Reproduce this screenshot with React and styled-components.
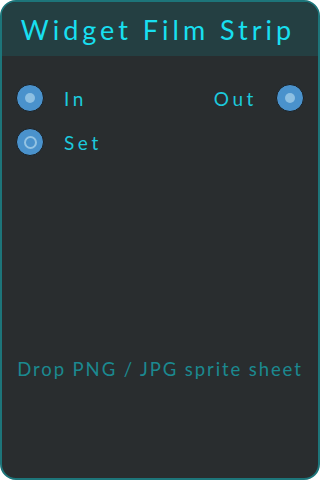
import React from "react"
import styled, { createGlobalStyle } from "styled-components"

const GlobalStyle = createGlobalStyle`
  html, body {
    margin: 0;
    padding: 0;
    background: #ffffff;
  }
  * {
    box-sizing: border-box;
  }
`

const Node = styled.div`
  width: 320px;
  height: 480px;
  display: flex;
  flex-direction: column;
  border: 2px solid #1d757a;
  border-radius: 16px;
  background: #292d2f;
  overflow: hidden;
  font-family: "Lato", "Open Sans", sans-serif;
`

const Header = styled.div`
  height: 54px;
  display: flex;
  align-items: center;
  justify-content: center;
  background: #243f42;
`

const Title = styled.div`
  color: #18dff0;
  font-size: 27px;
  letter-spacing: 4px;
  padding-right: 4px;
`

const Body = styled.div`
  flex: 1;
  display: flex;
  flex-direction: column;
  padding: 28px 14px 0;
`

const Row = styled.div`
  display: flex;
  align-items: center;
  justify-content: ${props => (props.spread ? "space-between" : "flex-start")};
  height: 28px;
  margin-bottom: 16px;
`

const Port = styled.div`
  display: flex;
  align-items: center;
  gap: ${props => (props.right ? "19px" : "20px")};
`

const Socket = styled.div`
  width: 28px;
  height: 28px;
  border-radius: 50%;
  background: #4a92cc;
  border: 1.5px solid #1a1e21;
  display: flex;
  align-items: center;
  justify-content: center;

  &::after {
    content: "";
    width: ${props => (props.ring ? "13px" : "10px")};
    height: ${props => (props.ring ? "13px" : "10px")};
    border-radius: 50%;
    box-sizing: border-box;
    background: ${props => (props.ring ? "transparent" : "#8ec0e2")};
    border: ${props => (props.ring ? "2.5px solid #93c3e3" : "none")};
  }
`

const Label = styled.span`
  color: #1cc9dc;
  font-size: 19px;
  letter-spacing: 3.6px;
`

const Hint = styled.div`
  margin-top: auto;
  margin-bottom: 98px;
  text-align: center;
  color: #1b8990;
  font-size: 18.5px;
  letter-spacing: 1.9px;
  white-space: nowrap;
`

export default function App() {
  return (
    <>
      <GlobalStyle />
      <Node>
        <Header>
          <Title>Widget Film Strip</Title>
        </Header>
        <Body>
          <Row spread>
            <Port>
              <Socket />
              <Label>In</Label>
            </Port>
            <Port right>
              <Label>Out</Label>
              <Socket />
            </Port>
          </Row>
          <Row>
            <Port>
              <Socket ring />
              <Label>Set</Label>
            </Port>
          </Row>
          <Hint>Drop PNG / JPG sprite sheet</Hint>
        </Body>
      </Node>
    </>
  )
}
